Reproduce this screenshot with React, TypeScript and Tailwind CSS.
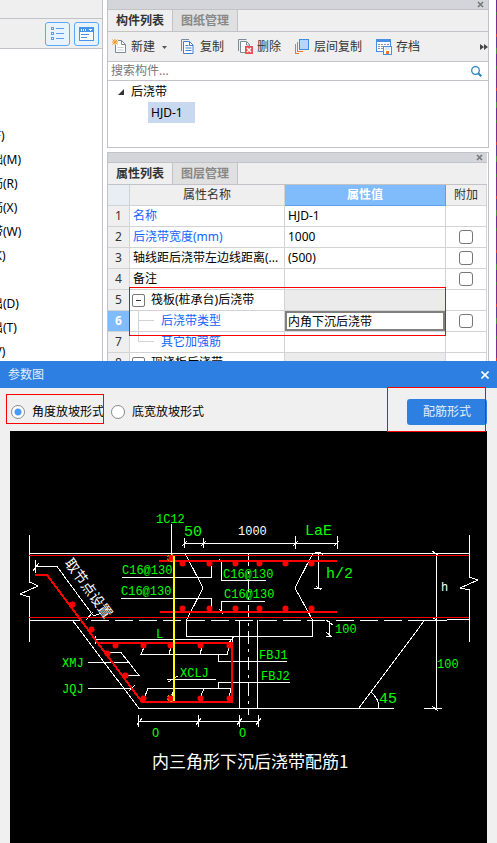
import type { ReactNode } from "react";

const menuItems = ["(F)", "础(M)", "筋(R)", "筋(X)", "带(W)", "(K)", "", "出(D)", "出(T)", "(V)"];

const rows = [
  { name: "名称", value: "HJD-1", blue: true, check: false },
  { name: "后浇带宽度(mm)", value: "1000", blue: true, check: true },
  { name: "轴线距后浇带左边线距离(...", value: "(500)", check: true },
  { name: "备注", value: "", check: true },
  { name: "筏板(桩承台)后浇带", value: "", group: true, check: false },
  { name: "后浇带类型", value: "内角下沉后浇带", blue: true, child: "middle", active: true, check: true },
  { name: "其它加强筋", value: "", blue: true, child: "last", check: false },
  { name: "现浇板后浇带", value: "", group: true, check: false },
];

const dots = [
  [171, 558], [182, 563], [209, 563], [235, 563], [259, 563], [285, 563], [311, 563],
  [182, 608], [209, 608], [235, 608], [259, 608], [285, 608], [311, 608],
  [72, 604], [91, 629], [107, 653], [125, 675],
  [115, 645], [143, 645], [170, 645], [200, 645], [229, 645],
  [143, 698], [170, 698], [200, 698], [229, 698],
];

const labels = [
  { x: 156, y: 523, t: "1C12" },
  { x: 122, y: 574, t: "C16@130" },
  { x: 121, y: 595, t: "C16@130" },
  { x: 223, y: 578, t: "C16@130" },
  { x: 224, y: 598, t: "C16@130" },
  { x: 156, y: 638, t: "L" },
  { x: 335, y: 633, t: "100" },
  { x: 437, y: 668, t: "100" },
  { x: 62, y: 667, t: "XMJ" },
  { x: 62, y: 693, t: "JQJ" },
  { x: 180, y: 677, t: "XCLJ" },
  { x: 259, y: 659, t: "FBJ1" },
  { x: 261, y: 680, t: "FBJ2" },
  { x: 152, y: 737, t: "O" },
  { x: 239, y: 737, t: "O" },
];

const bigLabels = [
  { x: 184, y: 536, t: "50" },
  { x: 305, y: 535, t: "LaE" },
  { x: 326, y: 578, t: "h/2" },
  { x: 379, y: 703, t: "45" },
];

function Close() {
  return (
    <button aria-label="关闭" className="mr-1 flex size-2 items-center justify-center">
      <svg width="7" height="7" viewBox="0 0 7 7" stroke="#777" strokeWidth="1.6">
        <path d="M1 1 6 6M6 1 1 6" />
      </svg>
    </button>
  );
}

function PanelHead({ tabs }: { tabs: string[] }) {
  return (
    <>
      <div className="flex h-[10px] shrink-0 items-center justify-end border-b border-[#c2c3c9] bg-[#d4d5da]">
        <Close />
      </div>
      <div className="flex h-[22px] shrink-0 border-b border-[#c2c3c9] bg-[#efefef] font-bold">
        <button className="border-r border-[#c2c3c9] px-2 text-[#333]">{tabs[0]}</button>
        <button className="border-r border-[#c2c3c9] bg-[#e0e0e0] px-2 text-[#888]">{tabs[1]}</button>
      </div>
    </>
  );
}

function Tool({ icon, children }: { icon: ReactNode; children: ReactNode }) {
  return (
    <button className="flex items-center gap-1 whitespace-nowrap">
      {icon}
      {children}
    </button>
  );
}

function LeftPanel() {
  return (
    <div className="flex w-[103px] shrink-0 flex-col overflow-hidden border-r border-[#c2c3c9] bg-white">
      <div className="h-[19px] shrink-0 border-b border-[#c2c3c9] bg-[#efefef]" />
      <div className="flex h-[30px] shrink-0 items-center justify-end gap-1 border-b border-[#c2c3c9] bg-[#efefef] pr-[3px]">
        <button aria-label="列表" className="flex h-6 w-[25px] items-center justify-center rounded-[3px] border border-[#5aa9f8] bg-[#e9f3fe]">
          <svg width="13" height="14" viewBox="0 0 13 14" fill="none" stroke="#5b9fe8" shapeRendering="crispEdges">
            <path d="M.5.5h2v2h-2zM.5 5.5h2v2h-2zM.5 10.5h2v2h-2zM5 1.5h8M5 6.5h8M5 11.5h8" />
          </svg>
        </button>
        <button aria-label="窗口" className="flex h-6 w-[25px] items-center justify-center rounded-[3px] border border-[#5aa9f8] bg-[#e9f3fe]">
          <svg width="15" height="14" viewBox="0 0 15 14" shapeRendering="crispEdges">
            <path d="M.5.5h14v13H.5z" fill="#fff" stroke="#4794ea" />
            <path d="M0 0h15v5H0z" fill="#4794ea" />
            <path d="M2 2h1v2H2zM4 2h1v2H4zM6 2h1v2H6zM10 2h3v1h-3zM11 3h1v1h-1z" fill="#fff" />
            <path d="M2 7.5h8M2 10.5h6" stroke="#4794ea" />
          </svg>
        </button>
      </div>
      <ul className="-ml-[9px] pt-[75px]">
        {menuItems.map((item, i) => (
          <li key={i} className="flex h-6 items-center whitespace-nowrap">
            {item && <a href="#">{item}</a>}
          </li>
        ))}
      </ul>
    </div>
  );
}

function ComponentPanel() {
  return (
    <section className="flex h-[148px] shrink-0 flex-col border-x border-b border-[#c2c3c9] bg-white">
      <PanelHead tabs={["构件列表", "图纸管理"]} />
      <div className="flex h-[30px] shrink-0 items-center border-b border-[#c2c3c9] bg-[#efefef] pl-1 text-[#333]">
        <div className="flex flex-1 items-center gap-[14px]">
          <div className="flex items-center gap-[7px]">
            <Tool
              icon={
                <svg width="15" height="15" viewBox="0 0 15 15">
                  <path d="M3.5 1.5h6l4 4v8h-10z" fill="#fff" stroke="#7d8b99" />
                  <path d="M9.5 1.5v4h4" fill="none" stroke="#7d8b99" />
                  <path d="M5.500 8.5h6M5.500 11h6" stroke="#c9ced4" />
                  <path d="M0 0h6v6H0z" fill="#efefef" />
                  <path d="M.5.5l5 5M5.500.5l-5 5M3 0v6M0 3h6" stroke="#f39a1f" />
                </svg>
              }
            >
              新建
            </Tool>
            <svg width="5" height="3" viewBox="0 0 5 3" className="mt-[2px]">
              <path d="M0 0h5L2.5 3z" fill="#555" />
            </svg>
          </div>
          <Tool
            icon={
              <svg width="13" height="15" viewBox="0 0 13 15" fill="none" className="mr-[2px]">
                <path d="M.5 12V.5H8" stroke="#7d8b99" />
                <path d="M2.5 2.5h6L12 6v8.5H2.5z" fill="#fff" stroke="#3c80d2" />
                <path d="M8.5 2.5v4H12" stroke="#3c80d2" />
                <path d="M4.5 6.5h3M4.5 9h6M4.5 11.5h6" stroke="#3c80d2" />
              </svg>
            }
          >
            复制
          </Tool>
          <Tool
            icon={
              <svg width="15" height="15" viewBox="0 0 15 15" fill="none">
                <path d="M.5 12V.5h8" stroke="#7d8b99" />
                <path d="M2.5 2.5h6l3 3v8h-9z" fill="#fff" stroke="#7d8b99" />
                <path d="M8.5 2.5V6h3" stroke="#7d8b99" />
                <path d="M7 7h8v8H7z" fill="#e0555a" />
                <path d="m9 9 4 4M13 9l-4 4" stroke="#fff" strokeWidth="1.5" />
              </svg>
            }
          >
            删除
          </Tool>
          <Tool
            icon={
              <svg width="15" height="16" viewBox="0 0 15 16" fill="none" shapeRendering="crispEdges">
                <path d="M4.5.5h9v10h-9z" fill="#b5d5fb" stroke="#3f8be0" />
                <path d="M2.5 3v9.5H8M.5 5v9.5H4" stroke="#e8762c" />
              </svg>
            }
          >
            层间复制
          </Tool>
          <Tool
            icon={
              <svg width="16" height="16" viewBox="0 0 16 16" fill="none" shapeRendering="crispEdges">
                <path d="M.5.5h14v12H.5z" fill="#fff" stroke="#4a90e2" />
                <path d="M0 0h15v3H0z" fill="#4a90e2" />
                <path d="M2 5.5h11M2 7.5h5M2 9.5h5" stroke="#8b98a5" strokeDasharray="2 1" />
                <path d="M7.5 7.5h8v8h-8z" fill="#fff" stroke="#4a90e2" />
                <path d="M9 8h5v3H9z" fill="#d9eafc" />
                <path d="M10 12h3v3h-3z" fill="#e8762c" />
              </svg>
            }
          >
            存档
          </Tool>
        </div>
        <button aria-label="更多">
          <svg width="8" height="6" viewBox="0 0 8 6" fill="#444">
            <path d="M0 0l4 3-4 3zM4 0l4 3-4 3z" />
          </svg>
        </button>
      </div>
      <div className="flex h-[19px] shrink-0 items-center border-b border-[#c2c3c9] pr-[6px] pl-[3px]">
        <input aria-label="搜索构件" placeholder="搜索构件..." className="min-w-0 flex-1 outline-none placeholder:text-[#777]" />
        <svg width="11" height="11" viewBox="0 0 11 11" fill="none" stroke="#2a84bd">
          <circle cx="4.5" cy="4.5" r="3.8" strokeWidth="1.3" />
          <path d="m7.3 7.3 3 3" strokeWidth="2" />
        </svg>
      </div>
      <div className="pl-[10px]">
        <div className="flex h-[21px] items-center gap-[7px]">
          <svg width="6" height="6" viewBox="0 0 6 6">
            <path d="M6 0v6H0z" fill="#333" />
          </svg>
          后浇带
        </div>
        <div className="ml-[30px] flex h-[21px] w-[47px] items-center bg-[#c8d8ef] pl-[3px]">HJD-1</div>
      </div>
    </section>
  );
}

function PropertyPanel() {
  return (
    <section className="relative shrink-0 border-x border-t border-[#c2c3c9] bg-white pr-px">
      <PanelHead tabs={["属性列表", "图层管理"]} />
      <table className="w-full table-fixed border-separate border-spacing-0">
        <colgroup>
          <col className="w-[22px]" />
          <col className="w-[155px]" />
          <col />
          <col className="w-[41px]" />
        </colgroup>
        <thead className="text-[#333]">
          <tr className="h-[21px] bg-[#efefef]">
            <th className="border-r border-b border-[#d2d3d6] bg-[#e9edf4] p-0" />
            <th className="border-r border-b border-[#d2d3d6] p-0 font-normal">属性名称</th>
            <th className="border-r border-b border-[#5f9fe6] bg-[#80bbfb] p-0 font-bold text-white">属性值</th>
            <th className="border-r border-b border-[#d2d3d6] p-0 font-normal">附加</th>
          </tr>
        </thead>
        <tbody>
          {rows.map((r, i) => (
            <tr key={r.name} className="h-[21px]">
              <td
                className={
                  "border-r border-b border-[#d2d3d6] p-0 text-center " +
                  (r.active ? "bg-[#80bbfb] font-bold text-white" : "bg-[#efefef] text-[#333]")
                }
              >
                {i + 1}
              </td>
              <td className={"border-r border-b border-[#d2d3d6] p-0 whitespace-nowrap " + (r.blue ? "text-[#1663ff]" : "")}>
                <div className="flex h-5 items-center overflow-hidden pl-[3px]">
                  {r.group && (
                    <button
                      aria-label="折叠"
                      className="mr-[6px] -ml-px flex size-[13px] shrink-0 items-center justify-center rounded-[2px] border border-[#777]"
                    >
                      <span className="h-px w-[5px] bg-[#333]" />
                    </button>
                  )}
                  {r.child && (
                    <span className={"mr-[7px] ml-[5px] w-4 shrink-0 self-start border-[#d2d3d6] " + (r.child === "last" ? "" : "h-5 border-l")}>
                      <span
                        className={"block h-[10px] border-b border-[#d2d3d6] " + (r.child === "last" ? "border-l" : "")}
                      />
                    </span>
                  )}
                  {r.name}
                </div>
              </td>
              <td className={"border-r border-b border-[#d2d3d6] p-0 " + (r.group ? "bg-[#ebebeb]" : "")}>
                {r.active ? (
                  <input
                    aria-label={r.name}
                    defaultValue={r.value}
                    className="block h-5 w-full border-2 border-[#808080] pl-px outline-none"
                  />
                ) : (
                  <span className="pl-[3px]">{r.value}</span>
                )}
              </td>
              <td className="border-r border-b border-[#d2d3d6] p-0">
                {r.check && (
                  <input
                    type="checkbox"
                    aria-label={"附加 " + r.name}
                    className="mx-auto block size-[14px] appearance-none rounded-[3px] border border-[#777] bg-white"
                  />
                )}
              </td>
            </tr>
          ))}
        </tbody>
      </table>
      <div className="pointer-events-none absolute top-[134px] right-[42px] left-[21px] h-[49px] border border-[#f00]" />
    </section>
  );
}

function Drawing() {
  return (
    <svg viewBox="10 431 477 412" className="block h-auto w-full bg-black" fill="none">
      <g stroke="#fff" shapeRendering="crispEdges">
        {/* slab outline with break marks */}
        <path d="M29.5 535V582L38 586 20 594 29.5 597V642M469.5 535V577L478 580 460 588 469.5 590V642" />
        <path d="M29 553.5H469M29 620.5H81M408 620.5H447M447 619.5H469" />
        <path d="M91 620.5H330M336 620.5H408" strokeDasharray="18 6" />
        {/* post-cast strip */}
        <path d="M185 553 203 588 186.5 620V636.5H312.5V620L295 588 313 553" />
        <path d="M239.5 708V620.5M257.5 620V708" />
        <path d="M248.5 553V715" strokeDasharray="13 5 3 5" />
        {/* sunken outline */}
        <path d="M73 621 139 708.5H394M424 621 359 708M371 692Q379 699 379 708" />
        {/* dimensions */}
        <path d="M184 543.5H337M184.5 538V548M203.5 538V548M295.5 536V549M337.5 536V549" />
        <path d="M182 546l5-5M201 546l5-5M293 546l5-5M334 546l5-5" />
        <path d="M35.5 560V573M33 571l6-8M35 566.5H57L92 614M86 620l7-8M90 612l4 4 7-3" />
        <path d="M95 639.5H232M95.5 636V644M93 636l5 7M232.5 636V643M229 643l5-7" />
        <path d="M318.5 553V588M315 552.5h5l3 2M314 588.5h8M316 586l5 4" />
        <path d="M329.5 621V636M326 636.5h6M326 620l7 5M326 632l6 5" />
        <path d="M436.5 553V708M424 708.5H442M432 551l6 4M432 617l6 4M432 706l6 5" />
        <path d="M138 721.5H259M138.5 715V727M198.5 715V727M239.5 715V727M258.5 715V727" />
        <path d="M137 725l5-7M196 725l5-7M237 725l5-7M256 725l5-7" />
        {/* leaders */}
        <path d="M171.5 524V556M122 577.5H211.5V566M121 598.5H211.5V607" />
        <path d="M219 559l3 3M221.5 561V580.5H266M265 601.5H221.5V612M219 609l4 5" />
        <path d="M88 662.5H130M105 652.5H121L139 675.5H127M88 688.5H133M129 691l6-6" />
        <path d="M144 647l-3 7.5H227L230 645M169 654l2-7M200 654l2-7M218.5 654V661.5H287" />
        <path d="M145 696l3-7.5H231L229 697M174 688l-2 8M204 688l-3 8M218.5 688V682.5H290" />
        <path d="M167 679.5H216M168 682l10-6" />
      </g>
      <g stroke="#f00" shapeRendering="crispEdges">
        <path d="M29 555.5H469M29 617.5H469" />
        <path d="M159 561H337M160 612H337M35 575H47L142 702H232V643H97" strokeWidth="2" />
      </g>
      <g fill="#f00">
        {dots.map(([x, y]) => (
          <circle key={`${x}-${y}`} cx={x + 0.5} cy={y + 0.5} r="3" />
        ))}
      </g>
      <path d="M174 556V701" stroke="#ff0" strokeWidth="2" />
      <g stroke="#ff0" strokeDasharray="2 2">
        <circle cx="171" cy="558" r="3.5" />
        <circle cx="171" cy="698" r="3.5" />
      </g>
      <g fill="#0f0" className="font-['Liberation_Mono',monospace] text-[12px]">
        {labels.map((l) => (
          <text key={`${l.x}-${l.y}`} x={l.x} y={l.y}>
            {l.t}
          </text>
        ))}
      </g>
      <g fill="#0f0" className="font-['Liberation_Mono',monospace] text-[15px]">
        {bigLabels.map((l) => (
          <text key={l.t} x={l.x} y={l.y}>
            {l.t}
          </text>
        ))}
      </g>
      <g fill="#fff" className="font-['Liberation_Mono',monospace] text-[12px]">
        <text x="238" y="535">1000</text>
        <text x="441" y="591">h</text>
      </g>
      <g fill="#fff" className="font-['Noto_Sans_CJK_SC',sans-serif]">
        <text transform="translate(64 563) rotate(54)" className="text-[14px]">
          取节点设置
        </text>
        <text x="152" y="768" className="text-[17px]">
          内三角形下沉后浇带配筋1
        </text>
      </g>
    </svg>
  );
}

function ParamDialog() {
  return (
    <div className="relative bg-[#f0f0f0]">
      <div className="flex h-[27px] items-center justify-between bg-[#2d80e2] px-2 text-[#e3effc]">
        <h2>参数图</h2>
        <button aria-label="关闭参数图">
          <svg width="8" height="8" viewBox="0 0 8 8" stroke="#fff" strokeWidth="1.6">
            <path d="M.5.5l7 7M7.5.5l-7 7" />
          </svg>
        </button>
      </div>
      <div className="flex h-[43px] items-center justify-between pr-[10px] pl-[11px]">
        <div className="flex gap-[7px] pt-1">
          {["角度放坡形式", "底宽放坡形式"].map((label, i) => (
            <label key={label} className="flex items-center gap-[7px]">
              <input
                type="radio"
                name="slope"
                defaultChecked={i === 0}
                className="size-[14px] appearance-none rounded-full border border-[#8a8a8a] bg-white checked:bg-[radial-gradient(circle,#4a9bf5_3px,#fff_4px)]"
              />
              {label}
            </label>
          ))}
        </div>
        <button className="mt-[5px] h-[26px] w-20 rounded-[3px] bg-[#2d80e2] text-[#e3effc]">配筋形式</button>
      </div>
      <div className="pointer-events-none absolute top-[33px] left-[6px] h-[30px] w-[98px] border border-[#f00]" />
      <div className="pointer-events-none absolute top-[26px] right-[11px] h-[45px] w-[99px] border border-[#f00]" />
      <div className="px-[10px]">
        <Drawing />
      </div>
    </div>
  );
}

export default function App() {
  return (
    <div className="overflow-hidden bg-white font-['Noto_Sans','Noto_Sans_CJK_SC',sans-serif] text-[12px] leading-4 text-black">
      <div className="flex h-[361px] overflow-hidden">
        <LeftPanel />
        <div className="ml-1 flex min-w-0 flex-1 flex-col gap-1">
          <ComponentPanel />
          <PropertyPanel />
        </div>
        <div className="ml-[7px] w-px shrink-0 bg-[repeating-linear-gradient(#6b2a9a_0_12px,#2f7d32_12px_15px,#7a2d8e_15px_34px,#e0342f_34px_37px,#5a3a9a_37px_48px,#3f8f3f_48px_54px)]" />
      </div>
      <ParamDialog />
    </div>
  );
}
